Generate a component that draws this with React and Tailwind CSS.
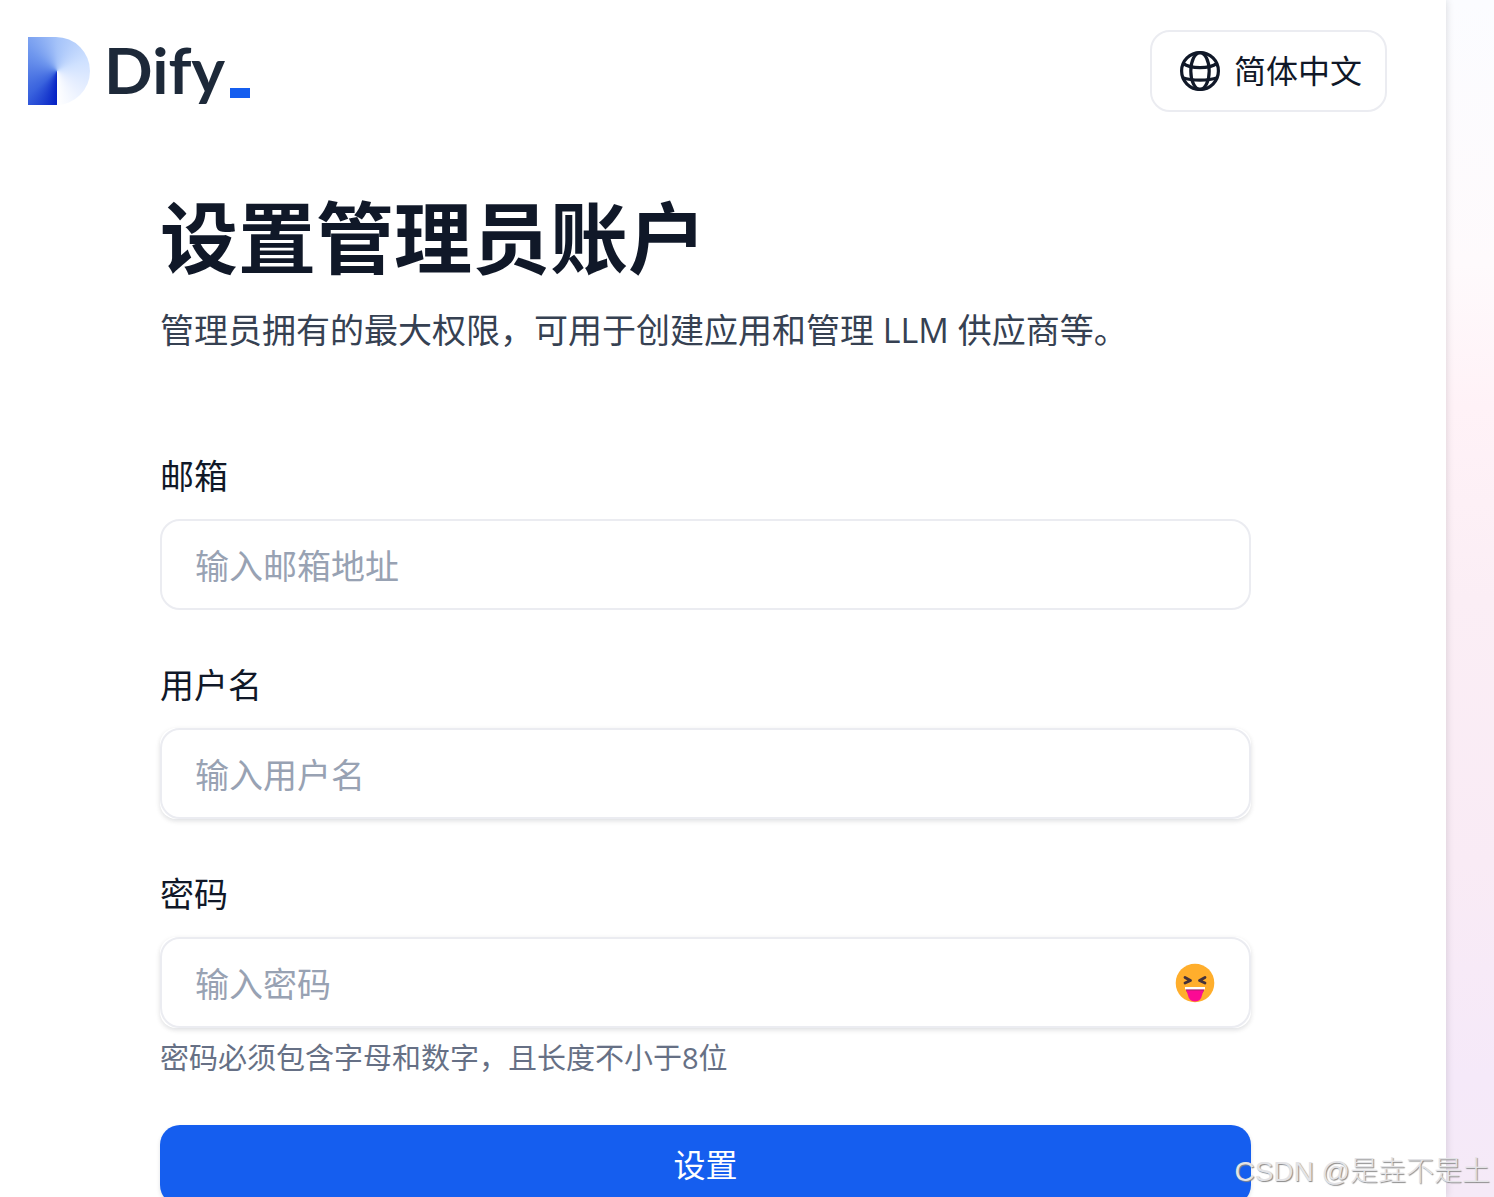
function DifyLogo() {
  return (
    <a href="#" aria-label="Dify" className="flex items-start">
      <span className="mt-[7px] h-[68px] w-[62px] rounded-r-[34px] bg-[conic-gradient(from_180deg_at_47%_50%,#0420c4_0deg,#3a63de_50deg,#6f97ee_125deg,#a5c3f9_180deg,#cfe1ff_250deg,#e9f0ff_310deg,#ffffff_360deg)]" />
      <span className="ml-[14px] font-['Lato',sans-serif] text-[64px] leading-[80px] font-bold text-[#1d2939]">Dify</span>
      <span className="mt-[58px] ml-[5px] h-[10px] w-5 bg-[#155eef]" />
    </a>
  );
}

function GlobeIcon() {
  return (
    <svg viewBox="0 0 24 24" className="size-12" fill="none" stroke="currentColor" strokeWidth="1.6" aria-hidden="true">
      <circle cx="12" cy="12" r="9.2" />
      <ellipse cx="12" cy="12" rx="4.6" ry="9.2" />
      <path d="M3.5 8.2C5.600 9.700 8.800 10.300 12 10.300s6.400-.6 8.500-2.100M3.300 15.400c2.300.8 5.400 1.200 8.700 1.200s6.400-.4 8.700-1.200" />
    </svg>
  );
}

function TongueFace() {
  return (
    <svg viewBox="0 0 40 40" className="size-10" aria-hidden="true">
      <circle cx="20" cy="20" r="19.3" fill="#ffae2c" />
      <path d="M10 14.5 15.500 17.500 10 20M30 14.500 24.500 17.500 30 20" fill="none" stroke="#45323a" strokeWidth="2.8" strokeLinejoin="round" strokeLinecap="round" />
      <path d="M10.500 24.500h19c-.2 2.500-1 4.500-2 5.500h-15c-1-1-1.800-3-2-5.500Z" fill="#a91f68" />
      <path d="M11.500 27.500h17l-2.200 7c-1.700 5.300-10.900 5.300-12.600 0Z" fill="#fb0a94" />
      <path d="M10 24h20v2.400H10Z" fill="#fff" />
    </svg>
  );
}

function Field({ id, label, type = "text", placeholder, raised, children }) {
  return (
    <div>
      <label htmlFor={id} className="mb-[19px] block text-[34px] leading-[48px] text-[#101828]">
        {label}
      </label>
      <div className={"relative" + (raised ? " rounded-2xl shadow-[0_2px_4px_rgba(16,24,40,0.08),0_2px_6px_rgba(16,24,40,0.06)]" : "")}>
        <input
          id={id}
          type={type}
          placeholder={placeholder}
          className="block h-[91px] w-full rounded-[20px] border-2 border-[#ebecf1] bg-white pt-[2px] pr-24 pl-[33px] text-[34px] text-[#101828] outline-none placeholder:text-[#98a2b3]"
        />
        {children}
      </div>
    </div>
  );
}

export default function App() {
  return (
    <div className="relative flex h-screen overflow-hidden bg-[linear-gradient(180deg,#fbfcff_0%,#fefafc_22%,#fff2f7_34%,#fbeef5_50%,#f9ebf5_72%,#f5e9f9_90%,#f5eaf7_100%)] font-['Open_Sans','Noto_Sans_CJK_SC',sans-serif]">
      <main className="mr-12 min-w-0 flex-1 bg-white shadow-[0_0_8px_rgba(16,24,40,0.16)]">
        <header className="flex items-start justify-between pt-[30px] pr-[59px] pl-7">
          <DifyLogo />
          <button type="button" className="flex h-[82px] items-center gap-[10px] rounded-[20px] border-2 border-[#ebecf1] bg-white pr-[23px] pl-6 text-[32px] text-[#101828]">
            <GlobeIcon />
            简体中文
          </button>
        </header>

        <div className="pt-[76px] pr-[195px] pl-40">
          <h1 className="text-[78px] leading-[100px] font-bold text-[#101828]">设置管理员账户</h1>
          <p className="mt-[18px] text-[34px] leading-[48px] text-[#364152]">
            管理员拥有的最大权限，可用于创建应用和管理 LLM 供应商等。
          </p>

          <form className="mt-[98px]">
            <div className="flex flex-col gap-[51px]">
              <Field id="email" label="邮箱" type="email" placeholder="输入邮箱地址" />
              <Field id="name" label="用户名" placeholder="输入用户名" raised />
              <Field id="password" label="密码" type="password" placeholder="输入密码" raised>
                <button type="button" aria-label="显示密码" className="absolute inset-y-0 right-9 flex items-center">
                  <TongueFace />
                </button>
              </Field>
            </div>
            <p className="mt-[10px] text-[29px] leading-10 text-[#667085]">密码必须包含字母和数字，且长度不小于8位</p>
            <button type="button" className="mt-[47px] block h-20 w-full rounded-[20px] bg-[#155eef] text-[32px] text-white shadow-[0_2px_4px_rgba(16,24,40,0.12)]">
              设置
            </button>
          </form>
        </div>
      </main>

      <p className="absolute right-1 bottom-1 font-['Liberation_Sans','Noto_Sans_CJK_SC',sans-serif] text-[28px] leading-[42px] font-light text-[#e3e3e6] [text-shadow:1px_1px_1px_#888]">
        CSDN @是垚不是土
      </p>
    </div>
  );
}
